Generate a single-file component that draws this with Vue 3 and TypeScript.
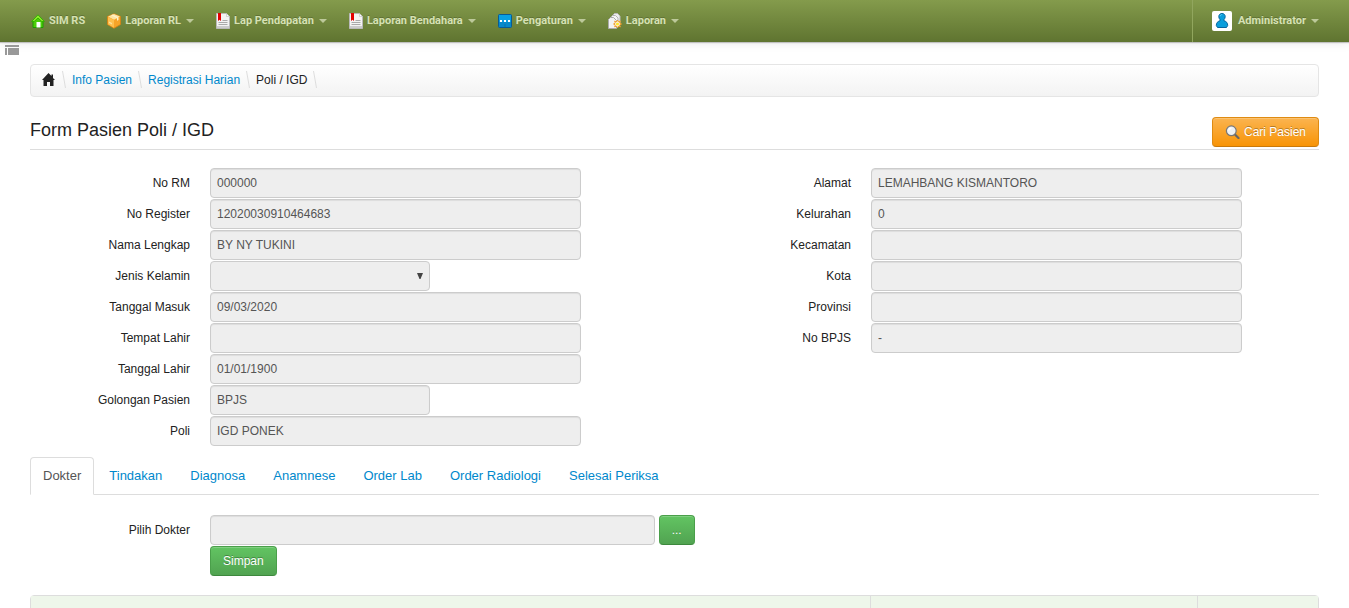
<script setup lang="ts">
import { ref } from 'vue'

interface MenuItem { label: string; icon: string; dropdown: boolean }
interface Field { id: string; label: string; value: string; kind?: 'select' | 'short' }

const menu: MenuItem[] = [
  { label: 'SIM RS', icon: 'home', dropdown: false },
  { label: 'Laporan RL', icon: 'box', dropdown: true },
  { label: 'Lap Pendapatan', icon: 'doc', dropdown: true },
  { label: 'Laporan Bendahara', icon: 'doc', dropdown: true },
  { label: 'Pengaturan', icon: 'dots', dropdown: true },
  { label: 'Laporan', icon: 'pages', dropdown: true },
]

const crumbs = [
  { label: 'Info Pasien', link: true },
  { label: 'Registrasi Harian', link: true },
  { label: 'Poli / IGD', link: false },
]

const columns: Field[][] = [
  [
    { id: 'no-rm', label: 'No RM', value: '000000' },
    { id: 'no-register', label: 'No Register', value: '12020030910464683' },
    { id: 'nama', label: 'Nama Lengkap', value: 'BY NY TUKINI' },
    { id: 'kelamin', label: 'Jenis Kelamin', value: '', kind: 'select' },
    { id: 'masuk', label: 'Tanggal Masuk', value: '09/03/2020' },
    { id: 'tempat', label: 'Tempat Lahir', value: '' },
    { id: 'lahir', label: 'Tanggal Lahir', value: '01/01/1900' },
    { id: 'golongan', label: 'Golongan Pasien', value: 'BPJS', kind: 'short' },
    { id: 'poli', label: 'Poli', value: 'IGD PONEK' },
  ],
  [
    { id: 'alamat', label: 'Alamat', value: 'LEMAHBANG KISMANTORO' },
    { id: 'kelurahan', label: 'Kelurahan', value: '0' },
    { id: 'kecamatan', label: 'Kecamatan', value: '' },
    { id: 'kota', label: 'Kota', value: '' },
    { id: 'provinsi', label: 'Provinsi', value: '' },
    { id: 'no-bpjs', label: 'No BPJS', value: '-' },
  ],
]

const tabs = ['Dokter', 'Tindakan', 'Diagnosa', 'Anamnese', 'Order Lab', 'Order Radiologi', 'Selesai Periksa']
const activeTab = ref('Dokter')
const dokter = ref('')
</script>

<template>
  <div class="page">
    <nav class="navbar">
      <a v-for="item in menu" :key="item.label" href="#" class="nav-item">
        <svg v-if="item.icon === 'home'" class="nav-icon" viewBox="0 0 14 16">
          <path d="M2 8v6.500h10V8L7 4z" fill="#4bcf08" stroke="#1e9a00" />
          <path d="M7 1.800.6 8.500h2.600L7 5l3.800 3.500h2.600z" fill="#8cec2a" stroke="#2fae00" stroke-width=".9" />
          <path d="M5.500 9h4v5.500h-4z" fill="#fff" />
        </svg>
        <svg v-else-if="item.icon === 'box'" class="nav-icon" viewBox="0 0 14 16">
          <path d="M7 .8 13.500 3.500v8L7 15.300.5 11.500v-8z" fill="#f7a428" stroke="#d98212" stroke-width=".8" />
          <path d="M7 1 13 3.600 7 6.800 1 3.600z" fill="#ffe5a2" />
          <path d="M1 4v7.300l6 3.400V7z" fill="#ffc04d" />
          <path d="m4 2.200 6 3v2.500l1.500-.7V4.500L5.500 1.600z" fill="#fff2c8" />
          <path d="m2 8.500 3 1.600v1.500L2 10z" fill="#ffe09a" />
        </svg>
        <svg v-else-if="item.icon === 'doc'" class="nav-icon" viewBox="0 0 14 16">
          <path d="M.5.500h10l3 3v12H.5z" fill="#f3f3f3" stroke="#b9b9b9" />
          <path d="M10.500.500v3h3z" fill="#fff" stroke="#bbb" stroke-width=".6" />
          <path d="M2 0h3v8L3.500 6.700 2 8z" fill="#e30000" />
          <path d="M6.500 7.500h5M2.500 9.500h9M2.500 11.500h9" stroke="#aaa" />
          <path d="M1 13h12v2H1z" fill="#ccc" />
        </svg>
        <svg v-else-if="item.icon === 'dots'" class="nav-icon" viewBox="0 0 14 16">
          <rect x=".5" y="1.500" width="13" height="13" rx="1" fill="#08a0e4" stroke="#075b96" />
          <path d="M1 9h12v5H1z" fill="#0788ca" />
          <path d="M2 7h2v2H2zM6 7h2v2H6zM10 7h2v2h-2z" fill="#fff" />
          <path d="M7 11v3" stroke="#0871ad" />
        </svg>
        <svg v-else class="nav-icon" viewBox="0 0 14 16">
          <path d="M4.500 2.500 6.500.500h3L12 3v9H4.500z" fill="#eee" stroke="#bbb" />
          <path d="M2.500 4.500 4.500 2.500h3L10 5v9H2.500z" fill="#f6f6f6" stroke="#b5b5b5" />
          <path d="M.5 6.500 2.500 4.500h3L8.500 7.500v8H.5z" fill="#f2f2f2" stroke="#aaa" />
          <path d="m9.500 7 .9 1.900 2-.8-.8 2 1.900.9-1.900.9.8 2-2-.8-.9 1.900-.9-1.900-2 .8.8-2-1.900-.9 1.900-.9-.8-2 2 .8z" fill="#fff" stroke="#f09a20" stroke-width=".9" />
          <circle cx="9.500" cy="11" r="1.600" fill="#ffe82a" />
        </svg>
        <span>{{ item.label }}</span>
        <i v-if="item.dropdown" class="caret"></i>
      </a>
      <a href="#" class="nav-item user">
        <svg class="avatar" viewBox="0 0 20 20">
          <rect width="20" height="20" rx="2" fill="#fff" />
          <path d="M10 2.500c2.100 0 3.200 1.400 3.200 3.100 0 1.300-.6 2.300-1.200 3v1.200c2.400.5 3.700 2.200 3.700 4.700l-1.200 2H5.500l-1.200-2c0-2.500 1.300-4.200 3.700-4.700V8.600c-.6-.7-1.200-1.700-1.200-3 0-1.700 1.100-3.100 3.200-3.100z" fill="#0b9edb" stroke="#07659d" />
          <path d="M8.200 5.200c.2-1.200 1-1.700 2-1.600" fill="none" stroke="#5fd0f7" />
        </svg>
        <span>Administrator</span>
        <i class="caret"></i>
      </a>
    </nav>

    <div class="toolbar">
      <button type="button" class="toggle" aria-label="Menu">
        <svg viewBox="0 0 14 10"><path d="M0 0h14v2H0zM0 3h2v7H0zM3 3h11v7H3z" fill="#999" /></svg>
      </button>
    </div>

    <main class="content">
      <nav class="breadcrumb">
        <a href="#" class="crumb-home" aria-label="Home">
          <svg viewBox="0 0 14 14"><path d="M6.500 0 0 7h1.500v6H5V9h3v4h3.500V7H13l-2-2V1.500H9.500V3z" fill="#222" /></svg>
        </a>
        <svg class="sep" viewBox="0 0 4 17"><path d="M.5 0 3.500 17" stroke="#ddd" fill="none" /></svg>
        <template v-for="crumb in crumbs" :key="crumb.label">
          <a v-if="crumb.link" href="#" class="crumb">{{ crumb.label }}</a>
          <span v-else class="crumb current">{{ crumb.label }}</span>
          <svg class="sep" viewBox="0 0 4 17"><path d="M.5 0 3.500 17" stroke="#ddd" fill="none" /></svg>
        </template>
      </nav>

      <header class="heading">
        <h1>Form Pasien Poli / IGD</h1>
        <button type="button" class="btn btn-warning">
          <svg class="search" viewBox="0 0 14 14">
            <path d="m9.500 9.500 3.500 3.500" stroke="#666" stroke-width="2.200" stroke-linecap="round" />
            <circle cx="5.800" cy="5.800" r="4.900" fill="#eef1f4" stroke="#777" stroke-width="1.200" />
            <path d="M3.300 5.500c.2-1.500 1.200-2.300 2.600-2.300" stroke="#fff" stroke-width="1.400" fill="none" />
          </svg>
          Cari Pasien
        </button>
      </header>

      <form class="patient" @submit.prevent>
        <div v-for="(fields, index) in columns" :key="index" class="column">
          <div v-for="field in fields" :key="field.id" class="row">
            <label :for="field.id">{{ field.label }}</label>
            <div class="control">
              <div v-if="field.kind === 'select'" class="select-wrap">
                <select :id="field.id" disabled><option></option></select>
                <svg class="arrow" viewBox="0 0 6 6"><path d="M0 0h6L3.500 6h-1z" fill="#444" /></svg>
              </div>
              <input v-else :id="field.id" type="text" readonly :value="field.value" :class="{ short: field.kind === 'short' }">
            </div>
          </div>
        </div>
      </form>

      <div class="tabs" role="tablist">
        <a v-for="tab in tabs" :key="tab" href="#" role="tab" :aria-selected="tab === activeTab"
          :class="{ active: tab === activeTab }" @click.prevent="activeTab = tab">{{ tab }}</a>
      </div>

      <form class="doctor" @submit.prevent>
        <label for="dokter">Pilih Dokter</label>
        <div class="doctor-control">
          <div class="picker">
            <input id="dokter" v-model="dokter" type="text" readonly>
            <button type="button" class="btn btn-success">...</button>
          </div>
          <button type="submit" class="btn btn-success">Simpan</button>
        </div>
      </form>

      <table class="list">
        <thead>
          <tr><th class="wide"></th><th class="medium"></th><th></th></tr>
        </thead>
      </table>
    </main>
  </div>
</template>

<style>
body {
  background: #fff;
}
</style>

<style scoped>
.page {
  height: 100vh;
  overflow: hidden;
  font: 12px/20px "Liberation Sans", Arial, sans-serif;
  color: #222;
}
.page * {
  box-sizing: border-box;
}
a {
  color: #0088cc;
  text-decoration: none;
}
.navbar {
  display: flex;
  align-items: stretch;
  gap: 22px;
  height: 42px;
  padding: 0 30px 0 31px;
  background: linear-gradient(#849b4c, #5f7430);
  box-shadow: 0 1px 1px rgba(0, 0, 0, .2), 0 1px 10px rgba(0, 0, 0, .1);
}
.nav-item {
  display: flex;
  align-items: center;
  gap: 4px;
  font-family: Roboto, "Liberation Sans", sans-serif;
  font-size: 11px;
  font-weight: bold;
  color: #d6e1b4;
  text-shadow: 0 -1px 0 rgba(0, 0, 0, .2);
  white-space: nowrap;
}
.nav-icon {
  width: 14px;
  height: 16px;
}
.caret {
  margin-left: 1px;
  border: 4px solid transparent;
  border-top-color: #bdc99a;
  border-bottom: 0;
}
.user {
  margin-left: auto;
  padding-left: 19px;
  border-left: 1px solid #91a65e;
}
.avatar {
  width: 20px;
  height: 20px;
  margin-right: 2px;
}
.toolbar {
  height: 22px;
  padding: 3px 5px;
}
.toggle {
  display: block;
  width: 14px;
  height: 10px;
  padding: 0;
  border: 0;
  background: none;
}
.toggle svg,
.crumb-home svg {
  display: block;
}
.content {
  padding: 0 30px;
}
.breadcrumb {
  display: flex;
  align-items: center;
  height: 33px;
  padding: 0 11px 2px;
  border: 1px solid #e5e5e5;
  border-radius: 4px;
  background: linear-gradient(#fff, #f3f3f3);
}
.crumb-home {
  width: 14px;
  height: 14px;
  margin-right: 6px;
}
.sep {
  width: 4px;
  height: 17px;
}
.crumb {
  margin: 0 6px;
}
.heading {
  display: flex;
  justify-content: space-between;
  align-items: flex-start;
  margin-top: 20px;
  height: 33px;
  border-bottom: 1px solid #ddd;
}
h1 {
  margin: 0;
  font-size: 18px;
  line-height: 26px;
  font-weight: normal;
}
.btn {
  display: inline-flex;
  align-items: center;
  justify-content: center;
  gap: 4px;
  height: 30px;
  padding: 0 12px;
  border: 1px solid;
  border-radius: 4px;
  color: #fff;
  font: 12px/20px "Liberation Sans", Arial, sans-serif;
  text-shadow: 0 -1px 0 rgba(0, 0, 0, .3);
  box-shadow: inset 0 1px 0 rgba(255, 255, 255, .2);
}
.btn-warning {
  border-color: #df8b12 #df8b12 #c9790a;
  background: linear-gradient(#fbb450, #f89406);
}
.btn-success {
  border-color: #4a9f4a #4a9f4a #3d883d;
  background: linear-gradient(#62c462, #51a351);
}
.search {
  width: 15px;
  height: 14px;
}
.patient {
  display: grid;
  grid-template-columns: 1fr 1fr;
  column-gap: 33px;
  margin-top: 18px;
}
.column {
  display: flex;
  flex-direction: column;
  gap: 1px;
}
.row,
.doctor {
  display: grid;
  grid-template-columns: 160px 1fr;
  column-gap: 20px;
}
label {
  line-height: 30px;
  text-align: right;
}
input,
select {
  display: block;
  width: 82.8%;
  height: 30px;
  padding: 0 6px 1px;
  border: 1px solid #ccc;
  border-radius: 4px;
  background: #eee;
  box-shadow: inset 0 1px 1px rgba(0, 0, 0, .075);
  color: #555;
  font: 12px/20px "Liberation Sans", Arial, sans-serif;
}
input.short {
  width: 220px;
}
.select-wrap {
  position: relative;
  width: 220px;
}
select {
  width: 100%;
  appearance: none;
  opacity: 1;
  box-shadow: none;
}
.arrow {
  position: absolute;
  right: 7px;
  top: 12px;
  width: 6px;
  height: 6px;
}
.tabs {
  display: flex;
  gap: 2px;
  margin-top: 11px;
  border-bottom: 1px solid #ddd;
}
.tabs a {
  margin-bottom: -1px;
  padding: 8px 12px;
  border: 1px solid transparent;
  border-radius: 4px 4px 0 0;
  font-size: 13px;
  line-height: 20px;
}
.tabs a.active {
  border-color: #ddd #ddd #fff;
  background: #fff;
  color: #555;
}
.doctor {
  margin-top: 20px;
}
.doctor-control {
  display: flex;
  flex-direction: column;
  align-items: flex-start;
  gap: 1px;
}
.picker {
  display: flex;
  gap: 4px;
  width: 100%;
}
.picker input {
  width: 40.1%;
}
.list {
  width: 100%;
  margin-top: 19px;
  border: 1px solid #ddd;
  border-radius: 4px;
  border-collapse: separate;
  border-spacing: 0;
  table-layout: fixed;
}
.list th {
  height: 36px;
  padding: 0;
  background: #eef6ea;
}
.list th + th {
  border-left: 1px solid #ddd;
}
.list .wide {
  width: 65.2%;
}
.list .medium {
  width: 25.4%;
}
</style>
